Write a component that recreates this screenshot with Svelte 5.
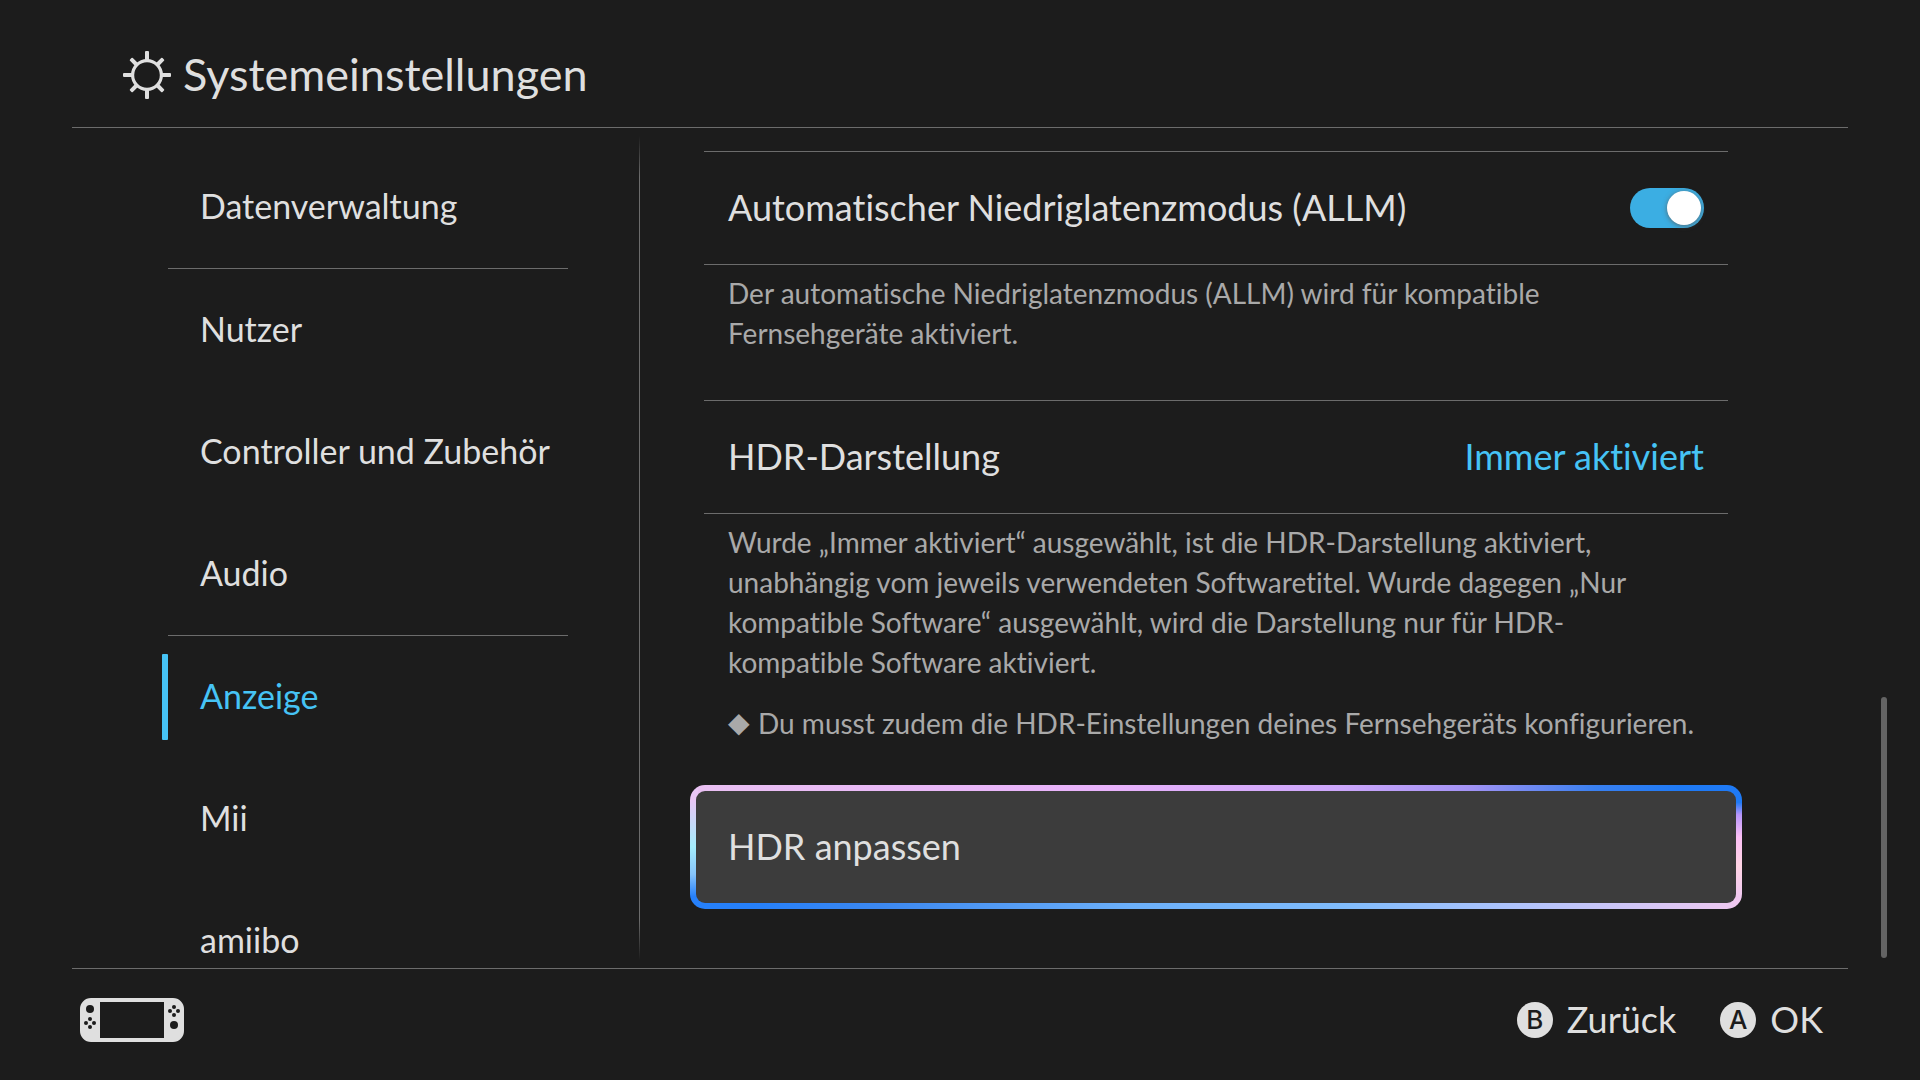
<script lang="ts">
	type NavItem = { id: string; label: string; divider?: boolean };

	const navItems: NavItem[] = [
		{ id: "data", label: "Datenverwaltung", divider: true },
		{ id: "users", label: "Nutzer" },
		{ id: "controllers", label: "Controller und Zubehör" },
		{ id: "audio", label: "Audio", divider: true },
		{ id: "display", label: "Anzeige" },
		{ id: "mii", label: "Mii" },
		{ id: "amiibo", label: "amiibo" },
	];

	const rays = [0, 45, 90, 135, 180, 225, 270, 315];

	let active = $state("display");
	let allm = $state(true);
</script>

<svelte:head>
	<title>Systemeinstellungen</title>
</svelte:head>

<div class="screen">
	<header class="header">
		<svg class="gear" viewBox="0 0 48 48" aria-hidden="true">
			<circle cx="24" cy="24" r="14.4" fill="none" stroke="currentColor" stroke-width="3.2" />
			{#each rays as angle}
				<rect
					x="22"
					y={angle % 90 === 0 ? 0 : 1}
					width="4"
					height="9.5"
					rx="1"
					fill="currentColor"
					transform="rotate({angle} 24 24)"
				/>
			{/each}
		</svg>
		<h1 class="title">Systemeinstellungen</h1>
	</header>

	<main class="body">
		<nav class="sidebar" aria-label="Systemeinstellungen">
			{#each navItems as item (item.id)}
				<a
					href="#{item.id}"
					class="nav-item"
					class:divider={item.divider}
					class:active={active === item.id}
					aria-current={active === item.id ? "page" : undefined}
					onclick={() => (active = item.id)}
				>
					{item.label}
				</a>
			{/each}
		</nav>

		<div class="separator"></div>

		<section class="content">
			<div class="row">
				<label class="label" for="allm">Automatischer Niedriglatenzmodus (ALLM)</label>
				<input id="allm" class="switch" type="checkbox" role="switch" bind:checked={allm} />
			</div>
			<div class="hint">
				<p>Der automatische Niedriglatenzmodus (ALLM) wird für kompatible Fernsehgeräte aktiviert.</p>
			</div>

			<button type="button" class="row">
				<span class="label">HDR-Darstellung</span>
				<span class="label value">Immer aktiviert</span>
			</button>
			<div class="hint">
				<p>
					Wurde „Immer aktiviert“ ausgewählt, ist die HDR-Darstellung aktiviert, unabhängig vom
					jeweils verwendeten Softwaretitel. Wurde dagegen „Nur kompatible Software“ ausgewählt,
					wird die Darstellung nur für HDR-kompatible Software aktiviert.
				</p>
				<p class="note">
					<span class="bullet">◆</span>
					<span>Du musst zudem die HDR-Einstellungen deines Fernsehgeräts konfigurieren.</span>
				</p>
			</div>

			<button type="button" class="focused">HDR anpassen</button>
		</section>

		<div class="scrollbar"></div>
	</main>

	<footer class="footer">
		<svg class="console" viewBox="0 0 104 44" aria-hidden="true">
			<path
				fill="currentColor"
				fill-rule="evenodd"
				d="M11 0H93A11 11 0 0 1 104 11V33A11 11 0 0 1 93 44H11A11 11 0 0 1 0 33V11A11 11 0 0 1 11 0ZM20 4V40H84V4Z"
			/>
			<g class="cutout">
				<circle cx="10" cy="11" r="4" />
				<circle cx="10" cy="21" r="2" />
				<circle cx="6" cy="25" r="2" />
				<circle cx="14" cy="25" r="2" />
				<circle cx="10" cy="29" r="2" />
				<circle cx="94" cy="9" r="2" />
				<circle cx="90" cy="13" r="2" />
				<circle cx="98" cy="13" r="2" />
				<circle cx="94" cy="17" r="2" />
				<circle cx="94" cy="27" r="4" />
			</g>
		</svg>

		<div class="actions">
			<button type="button" class="action">
				<span class="key">B</span>
				<span class="label">Zurück</span>
			</button>
			<button type="button" class="action">
				<span class="key">A</span>
				<span class="label">OK</span>
			</button>
		</div>
	</footer>
</div>

<style>
	:global(body) {
		margin: 0;
		background: #1c1c1c;
	}

	.screen {
		--bg: #1c1c1c;
		--text: #dfdfdf;
		--muted: #a9a9a9;
		--line: #6c6c6c;
		--accent: #46c3f5;

		display: flex;
		flex-direction: column;
		height: 100vh;
		background: var(--bg);
		color: var(--text);
		font-family: Lato, "Open Sans", sans-serif;
		font-size: 36px;
		font-variant-ligatures: none;
	}

	button {
		font: inherit;
		color: inherit;
		background: none;
		border: 0;
		padding: 0;
		text-align: left;
		font-variant-ligatures: none;
	}

	/* Header */

	.header {
		display: flex;
		align-items: center;
		gap: 12px;
		box-sizing: border-box;
		height: 128px;
		margin: 0 72px;
		padding: 23px 51px 0;
		border-bottom: 1px solid var(--line);
	}

	.gear {
		width: 48px;
		height: 48px;
	}

	.title {
		margin: 0;
		padding-bottom: 3px;
		font-size: 45px;
		font-weight: 400;
		line-height: 54px;
	}

	/* Body */

	.body {
		flex: 1;
		min-height: 0;
		display: grid;
		grid-template-columns: 639px 1px 1fr 6px;
		grid-template-rows: 100%;
		padding-right: 33px;
		overflow: hidden;
	}

	.sidebar {
		display: flex;
		flex-direction: column;
		padding: 18px 71px 0 168px;
	}

	.nav-item {
		position: relative;
		flex: none;
		padding: 0 0 2px 32px;
		color: inherit;
		font-size: 34px;
		line-height: 120px;
		text-decoration: none;
	}

	.nav-item.divider {
		border-bottom: 1px solid var(--line);
	}

	.nav-item.active {
		color: var(--accent);
	}

	.nav-item.active::before {
		content: "";
		position: absolute;
		left: -6px;
		top: 18px;
		bottom: 18px;
		width: 6px;
		border-radius: 1px;
		background: var(--accent);
	}

	.separator {
		margin: 8px 0;
		background: linear-gradient(transparent, var(--line) 5%, var(--line) 95%, transparent);
	}

	.content {
		padding: 23px 153px 0 64px;
	}

	.row {
		display: flex;
		justify-content: space-between;
		align-items: center;
		box-sizing: border-box;
		width: 100%;
		height: 114px;
		padding: 0 24px;
		border: 1px solid var(--line);
		border-width: 1px 0;
	}

	.label {
		padding-bottom: 2px;
	}

	.value {
		color: var(--accent);
	}

	.switch {
		appearance: none;
		width: 74px;
		height: 40px;
		margin: 0;
		padding: 3px;
		box-sizing: border-box;
		display: flex;
		border-radius: 20px;
		background: #666;
	}

	.switch:checked {
		justify-content: flex-end;
		background: #3baee3;
	}

	.switch::before {
		content: "";
		width: 34px;
		height: 34px;
		border-radius: 50%;
		background: #fff;
		box-shadow: 0 1px 5px rgba(90, 90, 90, 0.8);
	}

	.hint {
		padding: 8px 24px 47px;
		color: var(--muted);
		font-size: 28px;
		line-height: 40px;
	}

	.hint p {
		margin: 0;
		padding-right: 16px;
	}

	.hint .note {
		display: flex;
		margin-top: 21px;
		padding-right: 0;
	}

	.bullet {
		width: 30px;
		font-family: "DejaVu Sans", sans-serif;
	}

	.hint:has(.note) {
		padding-bottom: 42px;
	}

	/* Focus ring: one gradient per side, meeting at the corners */
	.focused {
		display: block;
		box-sizing: border-box;
		width: calc(100% + 28px);
		height: 124px;
		margin: 0 -14px;
		padding: 0 32px 2px;
		border: 6px solid transparent;
		border-radius: 15px;
		background:
			linear-gradient(#3c3c3c, #3c3c3c) padding-box,
			linear-gradient(#e9c6f5 12%, #a4ecfb 50%, #86c4fb 72%, #2680fa 90%) left / 8px 100% no-repeat border-box,
			linear-gradient(#1f7af5 14%, #b795fb 24%, #fbbff5 42%, #ffd4e4 65%, #f0c8f0 90%) right / 8px 100% no-repeat border-box,
			linear-gradient(90deg, #e9c0f2, #e8b2fb 40%, #cba6fb 62%, #a393f5 74%, #3a80f0 86%, #1f7af5 94%) top / 100% 50% no-repeat border-box,
			linear-gradient(90deg, #2680fa 6%, #3c88f0 18%, #6cb0fa 42%, #80bcfc 62%, #b4c4fc 80%, #f0c8f0) bottom / 100% 50% no-repeat border-box;
	}

	.scrollbar {
		align-self: end;
		height: 261px;
		margin-bottom: 10px;
		border-radius: 3px;
		background: #646464;
	}

	/* Footer */

	.footer {
		display: flex;
		justify-content: space-between;
		align-items: center;
		margin: 0 72px;
		padding: 29px 25px 38px 8px;
		border-top: 1px solid var(--line);
	}

	.console {
		width: 104px;
		height: 44px;
	}

	.cutout {
		fill: var(--bg);
	}

	.actions {
		display: flex;
		gap: 44px;
	}

	.action {
		display: flex;
		align-items: center;
		gap: 14px;
		line-height: 42px;
	}

	.key {
		width: 36px;
		height: 36px;
		border-radius: 50%;
		background: var(--text);
		color: var(--bg);
		font-family: Inter, sans-serif;
		font-size: 26px;
		font-weight: 500;
		line-height: 36px;
		text-align: center;
	}
</style>
